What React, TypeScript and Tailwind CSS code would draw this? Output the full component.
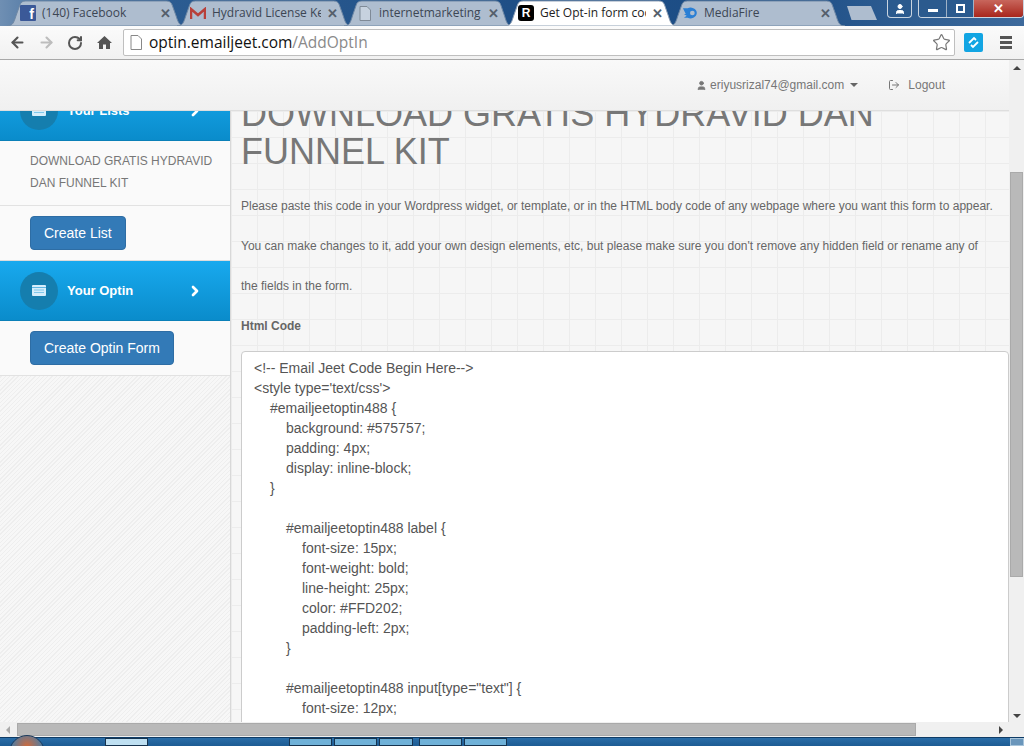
import { ArrowLeft, ArrowRight, RotateCw, Star, User, ChevronRight, LogOut } from "lucide-react";

const sans = "font-['Liberation_Sans',Arial,sans-serif]";
const ui = "font-['Open_Sans','Noto_Sans',sans-serif]";

function TabShape({ active }: { active?: boolean }) {
  return (
    <svg viewBox="0 0 180 26" preserveAspectRatio="none" className="absolute inset-0 w-full h-full">
      <path
        d="M0 26 C6 26 7 22 9 16 L13 5 C14 2 16 1 19 1 L161 1 C164 1 166 2 167 5 L171 16 C173 22 174 26 180 26 Z"
        fill={active ? "#ffffff" : "#aebdcf"}
        stroke={active ? "#8fa0b5" : "#6f88a5"}
        strokeWidth="1"
        vectorEffect="non-scaling-stroke"
      />
    </svg>
  );
}

function Tab({ title, icon, width, active, fade }: { title: string; icon: React.ReactNode; width: string; active?: boolean; fade?: boolean }) {
  return (
    <div className={`relative h-[26px] -mr-[8px] shrink-0 ${width} ${active ? "z-10" : ""}`}>
      <TabShape active={active} />
      <div className="relative flex items-center h-full pl-[13px] pr-[14px] gap-[6px]">
        <span className="w-4 h-4 shrink-0 flex items-center justify-center">{icon}</span>
        <span className={`flex-1 overflow-hidden whitespace-nowrap text-[12px] ${ui} ${active ? "text-[#222]" : "text-[#3c4654]"}`}>{title}</span>
        <span className="text-[13px] font-bold text-[#555f6b] leading-none">✕</span>
      </div>
      {fade && <span />}
    </div>
  );
}

function ListIcon() {
  return (
    <svg width="14" height="11" viewBox="0 0 14 11">
      <rect width="14" height="11" rx="1" fill="#d6eefb" />
      <rect y="2" width="14" height="1" fill="#5fb6e2" />
      <rect x="2" y="4.5" width="10" height="1" fill="#7fc7ea" />
      <rect x="2" y="7" width="10" height="1" fill="#7fc7ea" />
    </svg>
  );
}

function NavItem({ label, clip }: { label: string; clip?: boolean }) {
  return (
    <div className={`h-[60px] shrink-0 flex items-center pl-5 bg-[linear-gradient(#18a9ee,#0a8ccb)] border-b border-[#0b80b8] ${clip ? "-mt-[30px]" : ""}`}>
      <span className="w-[38px] h-[38px] rounded-full bg-[#157eae] flex items-center justify-center">
        <ListIcon />
      </span>
      <span className="ml-[9px] w-[120px] text-[13px] font-bold text-white">{label}</span>
      <ChevronRight size={16} strokeWidth={4} className="text-white" />
    </div>
  );
}

function Btn({ label }: { label: string }) {
  return (
    <span className="inline-block h-[34px] px-[13px] leading-[32px] rounded-[4px] bg-[#337ab7] border border-[#2e6da4] text-white text-[14px]">
      {label}
    </span>
  );
}

const code: [number, string][] = [
  [0, "<!-- Email Jeet Code Begin Here-->"],
  [0, "<style type='text/css'>"],
  [1, "#emailjeetoptin488 {"],
  [2, "background: #575757;"],
  [2, "padding: 4px;"],
  [2, "display: inline-block;"],
  [1, "}"],
  [0, ""],
  [2, "#emailjeetoptin488 label {"],
  [3, "font-size: 15px;"],
  [3, "font-weight: bold;"],
  [3, "line-height: 25px;"],
  [3, "color: #FFD202;"],
  [3, "padding-left: 2px;"],
  [2, "}"],
  [0, ""],
  [2, "#emailjeetoptin488 input[type=\"text\"] {"],
  [3, "font-size: 12px;"],
  [3, "border: 1px solid #CECECE;"],
];

const indent = ["pl-0", "pl-4", "pl-8", "pl-12"];

export default function App() {
  return (
    <div className={`w-[1024px] h-[746px] overflow-hidden flex flex-col bg-white ${sans}`}>
      {/* window title + tabs */}
      <div className="h-[26px] shrink-0 flex bg-[linear-gradient(90deg,#6f8fb3,#2f5f94_8%,#1f4f86_50%,#1c4d85_75%,#3d6a9c)] pl-[7px] relative">
        <Tab title="(140) Facebook" width="w-[178px]" icon={<span className="w-4 h-4 bg-[#3b5998] rounded-[1px] text-white text-[14px] font-bold leading-[18px] text-right pr-[2px] font-['Liberation_Sans']">f</span>} />
        <Tab title="Hydravid License Key" width="w-[175px]" icon={
          <svg width="16" height="13" viewBox="0 0 16 13"><path d="M1 12V2l7 6 7-6v10" fill="none" stroke="#b8403a" strokeWidth="2.5" /></svg>
        } />
        <Tab title="internetmarketing" width="w-[169px]" icon={
          <svg width="12" height="15" viewBox="0 0 12 15"><path d="M1 .5h7l3.5 3.5v10.500H1z" fill="#c7d2df" stroke="#7f8a97" /></svg>
        } />
        <Tab active title="Get Opt-in form code" width="w-[172px]" icon={
          <span className="w-4 h-4 rounded-[3px] bg-black text-white text-[12px] font-bold leading-4 text-center font-['Liberation_Sans']">R</span>
        } />
        <Tab title="MediaFire" width="w-[176px]" icon={
          <svg width="17" height="12" viewBox="0 0 17 12"><path d="M1 1h5c2-1 4-1 6 0 5 2 5 8 0 10-2 1-4 1-6 0H2l3-2-3-2h2L1 1z" fill="#2a7fd5" /><circle cx="11" cy="6" r="2.500" fill="#aebdcf" /></svg>
        } />
        <div className="mt-[6px] ml-[10px] w-[30px] h-[14px] bg-[#aebdcf] [clip-path:polygon(0_0,80%_0,100%_100%,15%_100%)]" />
        <div className="ml-auto flex items-start">
          <div className="w-[25px] h-[18px] mr-[6px] border border-[#c9d4e0] border-t-0 rounded-b-[4px] bg-[#2b5a8e] flex items-center justify-center">
            <User size={12} fill="white" className="text-white" />
          </div>
          <div className="flex h-[18px] w-[106px] border border-[#c9d4e0] border-t-0 rounded-b-[4px] overflow-hidden text-white">
            <span className="w-[28px] flex items-center justify-center border-r border-[#9fb2c7] bg-[#2b5a8e]"><span className="w-[10px] h-[3px] bg-white mt-1" /></span>
            <span className="w-[27px] flex items-center justify-center border-r border-[#9fb2c7] bg-[#2b5a8e]"><span className="w-[9px] h-[9px] border-2 border-white" /></span>
            <span className="flex-1 flex items-center justify-center bg-[linear-gradient(#c8665c,#a8261c)] font-bold text-[13px] leading-none">✕</span>
          </div>
        </div>
      </div>

      {/* toolbar */}
      <div className="h-[34px] shrink-0 flex items-center bg-[linear-gradient(#fbfbfb,#f1f1f1)] border-b border-[#a8a8a8]">
        <ArrowLeft size={17} strokeWidth={3} className="ml-[9px] text-[#555]" />
        <ArrowRight size={17} strokeWidth={3} className="ml-[12px] text-[#bdbdbd]" />
        <RotateCw size={16} strokeWidth={3} className="ml-[12px] text-[#555]" />
        <svg width="15" height="15" viewBox="0 0 15 15" className="ml-[14px] text-[#555]">
          <path d="M7.500 1 L15 8h-2v6H9V9.500H6V14H2V8H0z" fill="currentColor" />
        </svg>
        <div className="ml-[11px] w-[832px] h-[27px] bg-white border border-[#bfbfbf] rounded-[2px] flex items-center pl-[6px]">
          <svg width="12" height="15" viewBox="0 0 12 15"><path d="M1 .5h7l3.500 3.500v10.500H1z" fill="#fff" stroke="#888" /></svg>
          <span className={`ml-[7px] text-[15.500px] ${ui}`}>
            <span className="text-[#111]">optin.emailjeet.com</span>
            <span className="text-[#8a8a8a]">/AddOptIn</span>
          </span>
          <Star size={19} strokeWidth={1.5} className="ml-auto mr-[3px] text-[#777]" />
        </div>
        <div className="ml-[9px] w-[19px] h-[19px] rounded-[2px] bg-[#12a5e3] flex items-center justify-center">
          <svg width="13" height="13" viewBox="0 0 13 13"><path d="M2 7l5-5 2 2M11 6l-5 5-2-2" fill="none" stroke="white" strokeWidth="1.800" /></svg>
        </div>
        <div className="ml-[17px] flex flex-col gap-[2px]">
          <span className="w-[12px] h-[3px] bg-[#555]" />
          <span className="w-[12px] h-[3px] bg-[#555]" />
          <span className="w-[12px] h-[3px] bg-[#555]" />
        </div>
      </div>

      {/* page viewport */}
      <div className="h-[662px] shrink-0 flex">
        <div className="w-[1009px] flex flex-col overflow-hidden">
          <div className="h-[51px] shrink-0 flex items-center justify-end pr-[64px] bg-[linear-gradient(#f9f9f9,#f0f0f0)] border-b border-[#dedede] text-[12px] text-[#777]">
            <User size={11} fill="#777" className="mr-[3px]" />
            <span>eriyusrizal74@gmail.com</span>
            <span className="ml-[6px] w-0 h-0 border-x-4 border-x-transparent border-t-4 border-t-[#666]" />
            <LogOut size={12} className="ml-[30px] mr-[8px]" />
            <span>Logout</span>
          </div>

          <div className="flex flex-1 min-h-0 overflow-hidden">
            <div className="w-[231px] shrink-0 flex flex-col border-r border-[#d8d8d8] bg-[repeating-linear-gradient(135deg,#f7f7f7_0,#f7f7f7_2px,#eeeeee_2px,#eeeeee_3px)]">
              <NavItem clip label="Your Lists" />
              <div className="bg-[#fafafa] border-b border-[#e2e2e2] h-[65px] pl-[30px] pt-[9px] pr-[10px] text-[12px] leading-[22px] text-[#777]">
                DOWNLOAD GRATIS HYDRAVID DAN FUNNEL KIT
              </div>
              <div className="bg-[#fafafa] h-[55px] pl-[30px] pt-[10px] border-b border-[#dcdcdc]">
                <Btn label="Create List" />
              </div>
              <NavItem label="Your Optin" />
              <div className="bg-[#fafafa] h-[55px] pl-[30px] pt-[10px] border-b border-[#e2e2e2]">
                <Btn label="Create Optin Form" />
              </div>
            </div>

            <div className="flex-1 min-w-0 pl-[10px] overflow-hidden bg-[#f6f6f6] bg-[linear-gradient(#ececec_1px,transparent_1px),linear-gradient(90deg,#ececec_1px,transparent_1px)] bg-[size:26px_26px]">
              <h1 className="-mt-[16px] text-[36px] leading-[38px] text-[#777] whitespace-pre-line">
                {"DOWNLOAD GRATIS HYDRAVID DAN\nFUNNEL KIT"}
              </h1>
              <div className="mt-[15px] text-[12px] leading-[40px] text-[#666] whitespace-nowrap">
                <p>Please paste this code in your Wordpress widget, or template, or in the HTML body code of any webpage where you want this form to appear.</p>
                <p>You can make changes to it, add your own design elements, etc, but please make sure you don't remove any hidden field or rename any of</p>
                <p>the fields in the form.</p>
                <p className="font-bold">Html Code</p>
              </div>
              <div className="mt-[5px] bg-white border border-[#ccc] rounded-[4px] pl-[12px] pt-[6px] pb-[20px] text-[14px] leading-[20px] text-[#555] h-[500px]">
                {code.map(([lvl, text], i) => (
                  <div key={i} className={`h-5 ${indent[lvl]}`}>{text}</div>
                ))}
              </div>
            </div>
          </div>
        </div>

        {/* vertical scrollbar */}
        <div className="w-[15px] shrink-0 bg-[#f0f0f0] flex flex-col items-center pt-[6px]">
          <span className="w-0 h-0 border-x-[4px] border-x-transparent border-b-[4px] border-b-[#444]" />
          <span className="mt-[102px] w-[13px] h-[405px] bg-[#b9b9b9] border border-[#aaa]" />
          <span className="mt-auto mb-[4px] w-0 h-0 border-x-[4px] border-x-transparent border-t-[4px] border-t-[#444]" />
        </div>
      </div>

      {/* horizontal scrollbar */}
      <div className="h-[15px] shrink-0 bg-[#f0f0f0] flex items-center pl-[6px]">
        <span className="w-0 h-0 border-y-[4px] border-y-transparent border-r-[4px] border-r-[#aaa]" />
        <span className="ml-[7px] w-[899px] h-[13px] bg-[#b9b9b9] border border-[#aaa]" />
        <span className="ml-auto mr-[21px] w-0 h-0 border-y-[4px] border-y-transparent border-l-[4px] border-l-[#444]" />
      </div>

      {/* taskbar */}
      <div className="flex-1 relative flex bg-[linear-gradient(#2a6da8,#1d5c94)] border-t border-[#0f3c66]">
        <span className="absolute left-[9px] top-[-3px] w-[36px] h-[36px] rounded-full bg-[radial-gradient(circle_at_50%_30%,#cf6a3c,#3f7fb0_60%)] border border-[#1b3a5c]" />
        <span className="ml-[105px] w-[43px] bg-[#bfe0f2] border border-[#16334f]" />
        <span className="ml-[141px] w-[43px] bg-[#6fb1d8] border border-[#16334f]" />
        <span className="w-[43px] ml-[2px] bg-[#6fb1d8] border border-[#16334f]" />
        <span className="w-[34px] ml-[2px] bg-[#6fb1d8] border border-[#16334f]" />
        <span className="w-[43px] ml-[6px] bg-[#6fb1d8] border border-[#16334f]" />
        <span className="w-[43px] ml-[2px] bg-[#6fb1d8] border border-[#16334f]" />
        <span className="ml-auto w-[14px] bg-[#6a96bb] border border-[#a7c4da]" />
      </div>
    </div>
  );
}
